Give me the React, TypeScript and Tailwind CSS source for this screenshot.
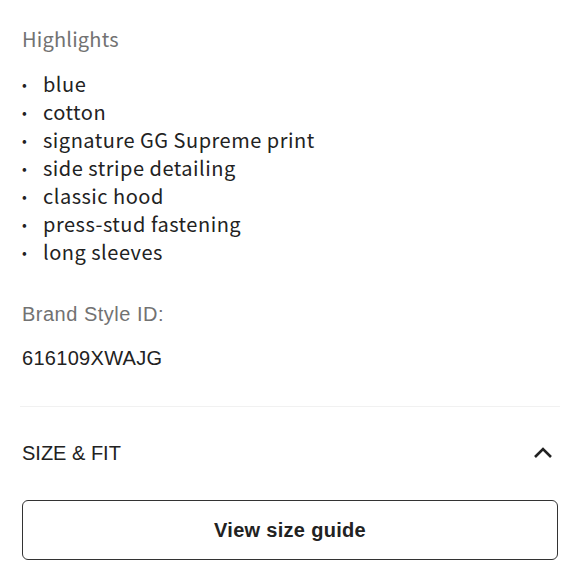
import React from "react";

const items = [
  "blue",
  "cotton",
  "signature GG Supreme print",
  "side stripe detailing",
  "classic hood",
  "press-stud fastening",
  "long sleeves",
];

const jp = { fontFamily: '"Noto Sans CJK JP", "Noto Sans", sans-serif' };
const hv = { fontFamily: '"Liberation Sans", Arial, sans-serif' };

export default function App() {
  return (
    <div className="w-[580px] h-[580px] bg-white overflow-hidden px-[22px] pt-[25px]">
      <div className="text-[20px] leading-[28px] text-[#727272] tracking-[0.2px]" style={jp}>
        Highlights
      </div>
      <ul className="mt-[17px]" style={jp}>
        {items.map((t) => (
          <li key={t} className="flex items-center text-[20px] leading-[28px] text-[#222] tracking-[0.5px]">
            <span className="w-[21px] shrink-0 text-[14px] leading-[28px]">•</span>
            <span>{t}</span>
          </li>
        ))}
      </ul>
      <div className="mt-[36px] text-[20px] leading-[24px] text-[#727272] tracking-[0.5px]" style={hv}>
        Brand Style ID:
      </div>
      <div className="mt-[20px] text-[20px] leading-[24px] text-[#222] tracking-[0.3px]" style={hv}>
        616109XWAJG
      </div>
      <div className="mt-[36px] -mx-[2px] h-px bg-[#f1f1f1]" />
      <div className="mt-[34px] flex items-center justify-between" style={hv}>
        <span className="text-[20px] leading-[24px] text-[#222]">SIZE &amp; FIT</span>
        <svg width="20" height="14" viewBox="0 0 20 14" className="mr-[5px]">
          <path d="M2 11 L10 3 L18 11" fill="none" stroke="#222" strokeWidth="2.6" />
        </svg>
      </div>
      <button
        className="mt-[35px] w-full h-[60px] rounded-[6px] border-[1.5px] border-[#333] bg-white flex items-center justify-center text-[20px] font-bold text-[#222] tracking-[0.3px]"
        style={hv}
      >
        View size guide
      </button>
    </div>
  );
}
